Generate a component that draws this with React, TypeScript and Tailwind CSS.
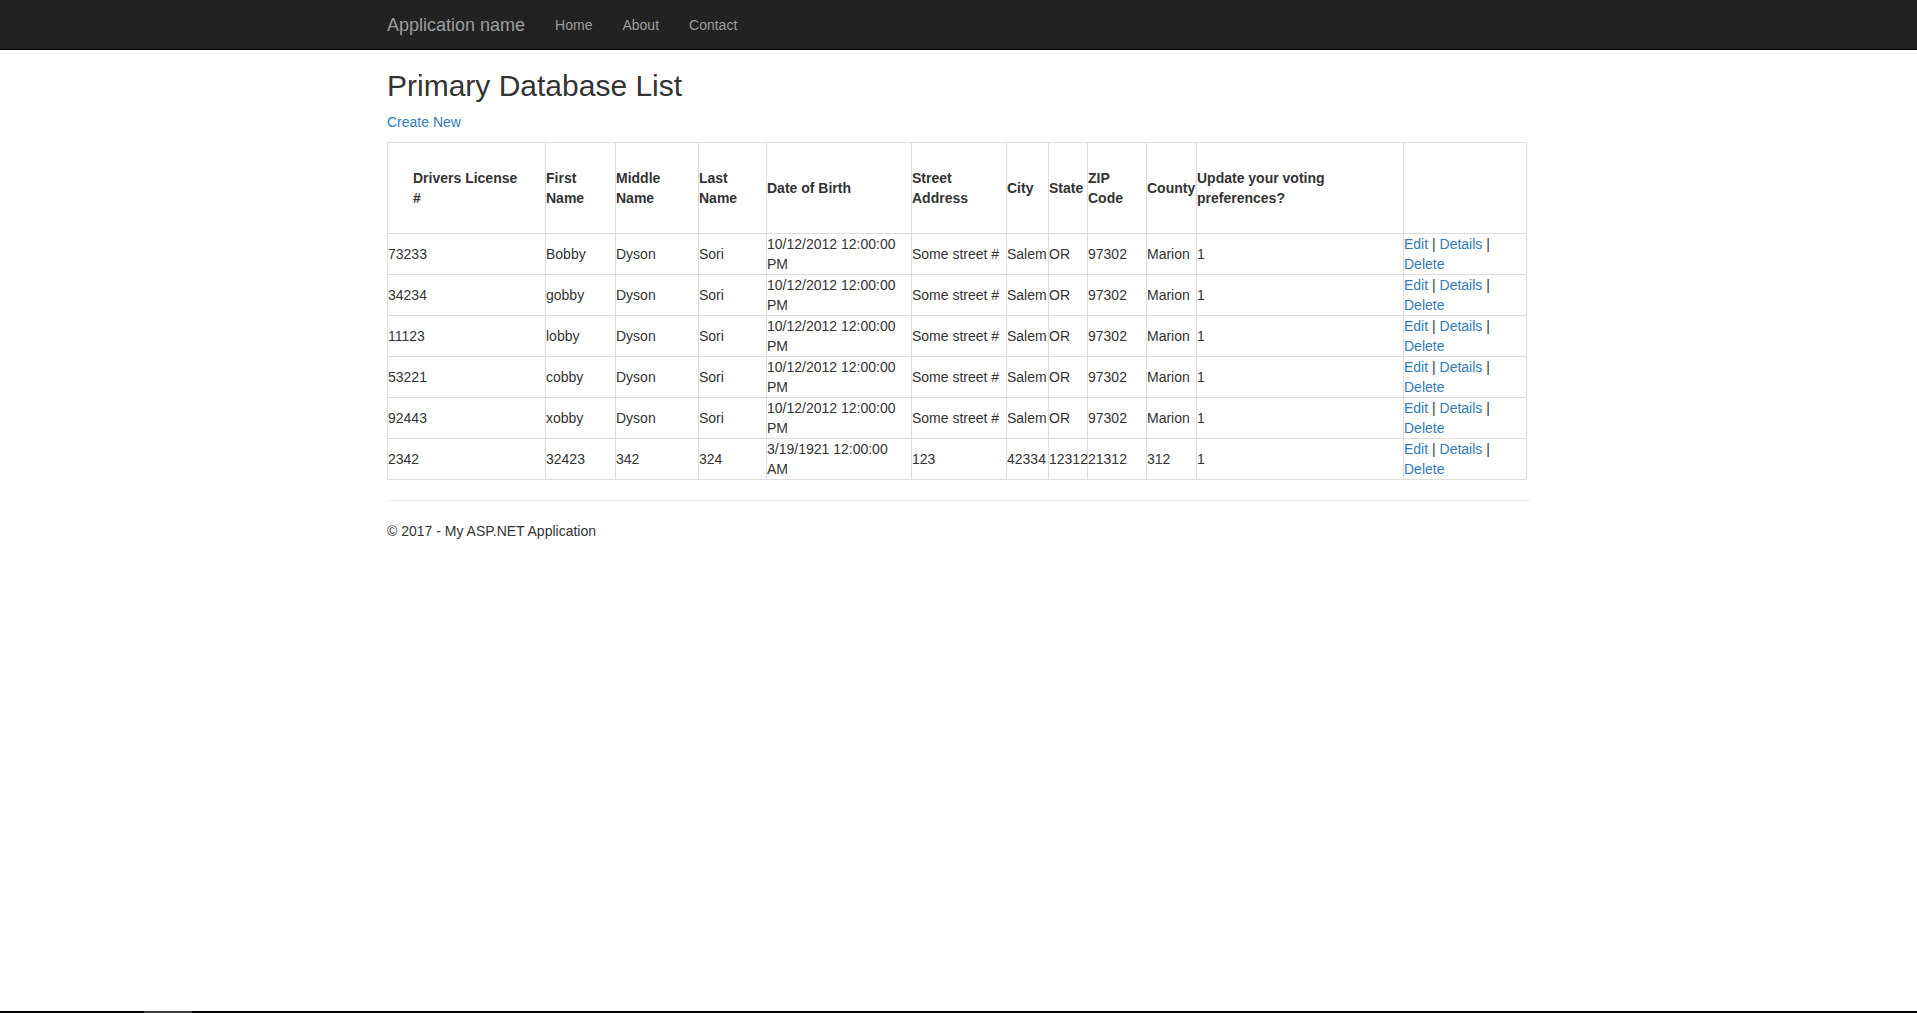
const rows = [
	{ dl: '73233', first: 'Bobby', middle: 'Dyson', last: 'Sori', dob: '10/12/2012 12:00:00 PM', street: 'Some street #', city: 'Salem', state: 'OR', zip: '97302', county: 'Marion', vote: '1' },
	{ dl: '34234', first: 'gobby', middle: 'Dyson', last: 'Sori', dob: '10/12/2012 12:00:00 PM', street: 'Some street #', city: 'Salem', state: 'OR', zip: '97302', county: 'Marion', vote: '1' },
	{ dl: '11123', first: 'lobby', middle: 'Dyson', last: 'Sori', dob: '10/12/2012 12:00:00 PM', street: 'Some street #', city: 'Salem', state: 'OR', zip: '97302', county: 'Marion', vote: '1' },
	{ dl: '53221', first: 'cobby', middle: 'Dyson', last: 'Sori', dob: '10/12/2012 12:00:00 PM', street: 'Some street #', city: 'Salem', state: 'OR', zip: '97302', county: 'Marion', vote: '1' },
	{ dl: '92443', first: 'xobby', middle: 'Dyson', last: 'Sori', dob: '10/12/2012 12:00:00 PM', street: 'Some street #', city: 'Salem', state: 'OR', zip: '97302', county: 'Marion', vote: '1' },
	{ dl: '2342', first: '32423', middle: '342', last: '324', dob: '3/19/1921 12:00:00 AM', street: '123', city: '42334', state: '12312', zip: '21312', county: '312', vote: '1' },
]

const th = 'border border-[#ddd] p-0 text-left align-middle font-bold'
const td = 'border border-[#ddd] p-0 align-middle'

export default function App() {
	return (
		<div className="min-h-screen bg-white text-[14px] leading-[20px] text-[#333] [font-family:'Liberation_Sans',Arial,sans-serif]">
			<nav className="h-[50px] border-b border-[#080808] bg-[#222]">
				<div className="mx-auto flex w-[1173px] px-[15px]">
					<a href="#" className="py-[15px] pr-[15px] text-[18px] leading-[20px] text-[#9d9d9d]">
						Application name
					</a>
					<ul className="flex">
						<li><a href="#" className="block p-[15px] text-[#9d9d9d]">Home</a></li>
						<li><a href="#" className="block p-[15px] text-[#9d9d9d]">About</a></li>
						<li><a href="#" className="block p-[15px] text-[#9d9d9d]">Contact</a></li>
					</ul>
				</div>
			</nav>

			<main className="mx-auto w-[1173px] px-[15px]">
				<h2 className="mt-[19px] mb-[10px] text-[30px] leading-[33px] font-medium">Primary Database List</h2>
				<p className="mb-[10px]">
					<a href="#" className="text-[#337ab7]">Create New</a>
				</p>

				<table className="mb-[20px] w-[1140px] table-fixed border-collapse">
					<thead>
						<tr>
							<th className={`${th} w-[158px] !p-[25px]`}>Drivers License #</th>
							<th className={`${th} w-[70px]`}>First Name</th>
							<th className={`${th} w-[83px]`}>Middle Name</th>
							<th className={`${th} w-[68px]`}>Last Name</th>
							<th className={`${th} w-[145px]`}>Date of Birth</th>
							<th className={`${th} w-[95px]`}>Street Address</th>
							<th className={`${th} w-[42px]`}>City</th>
							<th className={`${th} w-[39px]`}>State</th>
							<th className={`${th} w-[59px]`}>ZIP Code</th>
							<th className={`${th} w-[50px]`}>County</th>
							<th className={`${th} w-[207px]`}>Update your voting preferences?</th>
							<th className={th}></th>
						</tr>
					</thead>
					<tbody>
						{rows.map((r) => (
							<tr key={r.dl} className="h-[41px]">
								<td className={td}>{r.dl}</td>
								<td className={td}>{r.first}</td>
								<td className={td}>{r.middle}</td>
								<td className={td}>{r.last}</td>
								<td className={td}>{r.dob}</td>
								<td className={td}>{r.street}</td>
								<td className={td}>{r.city}</td>
								<td className={td}>{r.state}</td>
								<td className={td}>{r.zip}</td>
								<td className={td}>{r.county}</td>
								<td className={td}>{r.vote}</td>
								<td className={td}>
									<a href="#" className="text-[#337ab7]">Edit</a> |{' '}
									<a href="#" className="text-[#337ab7]">Details</a> |{' '}
									<a href="#" className="text-[#337ab7]">Delete</a>
								</td>
							</tr>
						))}
					</tbody>
				</table>

				<hr className="mb-[20px] border-t border-[#eee]" />
				<footer>
					<p>© 2017 - My ASP.NET Application</p>
				</footer>
			</main>

			<div className="fixed bottom-0 left-0 h-[2px] w-full bg-black">
				<div className="ml-[144px] h-full w-[48px] bg-[#3c3c3c]" />
			</div>
		</div>
	)
}
